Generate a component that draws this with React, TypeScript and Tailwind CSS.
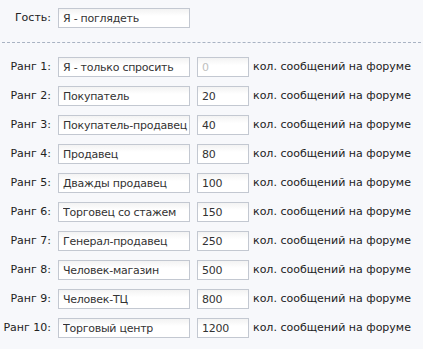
const RANKS = [
  { name: 'Я - только спросить', posts: '' },
  { name: 'Покупатель', posts: '20' },
  { name: 'Покупатель-продавец', posts: '40' },
  { name: 'Продавец', posts: '80' },
  { name: 'Дважды продавец', posts: '100' },
  { name: 'Торговец со стажем', posts: '150' },
  { name: 'Генерал-продавец', posts: '250' },
  { name: 'Человек-магазин', posts: '500' },
  { name: 'Человек-ТЦ', posts: '800' },
  { name: 'Торговый центр', posts: '1200' }
];

const inputClass =
  'h-[20px] border border-[#c3c8d1] bg-white pl-[4px] pr-[1px] text-[#333] tracking-[-0.25px] outline-none bg-gradient-to-b from-[#f3f3f3] to-white to-[40%]';

export default function App() {
  return (
    <div
      className="w-[423px] h-[349px] bg-[#f7f8fb] text-[11px] text-[#222] pt-[8px] overflow-hidden"
      style={{ fontFamily: '"DejaVu Sans", sans-serif' }}
    >
      <div className="flex items-center">
        <span className="w-[51px] text-right mr-[7px]">Гость:</span>
        <input className={`${inputClass} w-[132px]`} defaultValue="Я - поглядеть" />
      </div>

      <div className="mt-[14px] mx-[2px] border-t border-dashed border-[#a9b3c3]" />

      <div className="mt-[14px] flex flex-col gap-[9px]">
        {RANKS.map((rank, i) => (
          <div key={i} className="flex items-center">
            <span className="w-[51px] text-right mr-[7px] whitespace-nowrap">
              Ранг {i + 1}:
            </span>
            <input className={`${inputClass} w-[132px]`} defaultValue={rank.name} />
            <input
              className={`${inputClass} w-[52px] ml-[7px] placeholder:text-[#c0c0c0]`}
              defaultValue={rank.posts}
              placeholder="0"
            />
            <span className="ml-[4px] whitespace-nowrap">кол. сообщений на форуме</span>
          </div>
        ))}
      </div>
    </div>
  );
}
